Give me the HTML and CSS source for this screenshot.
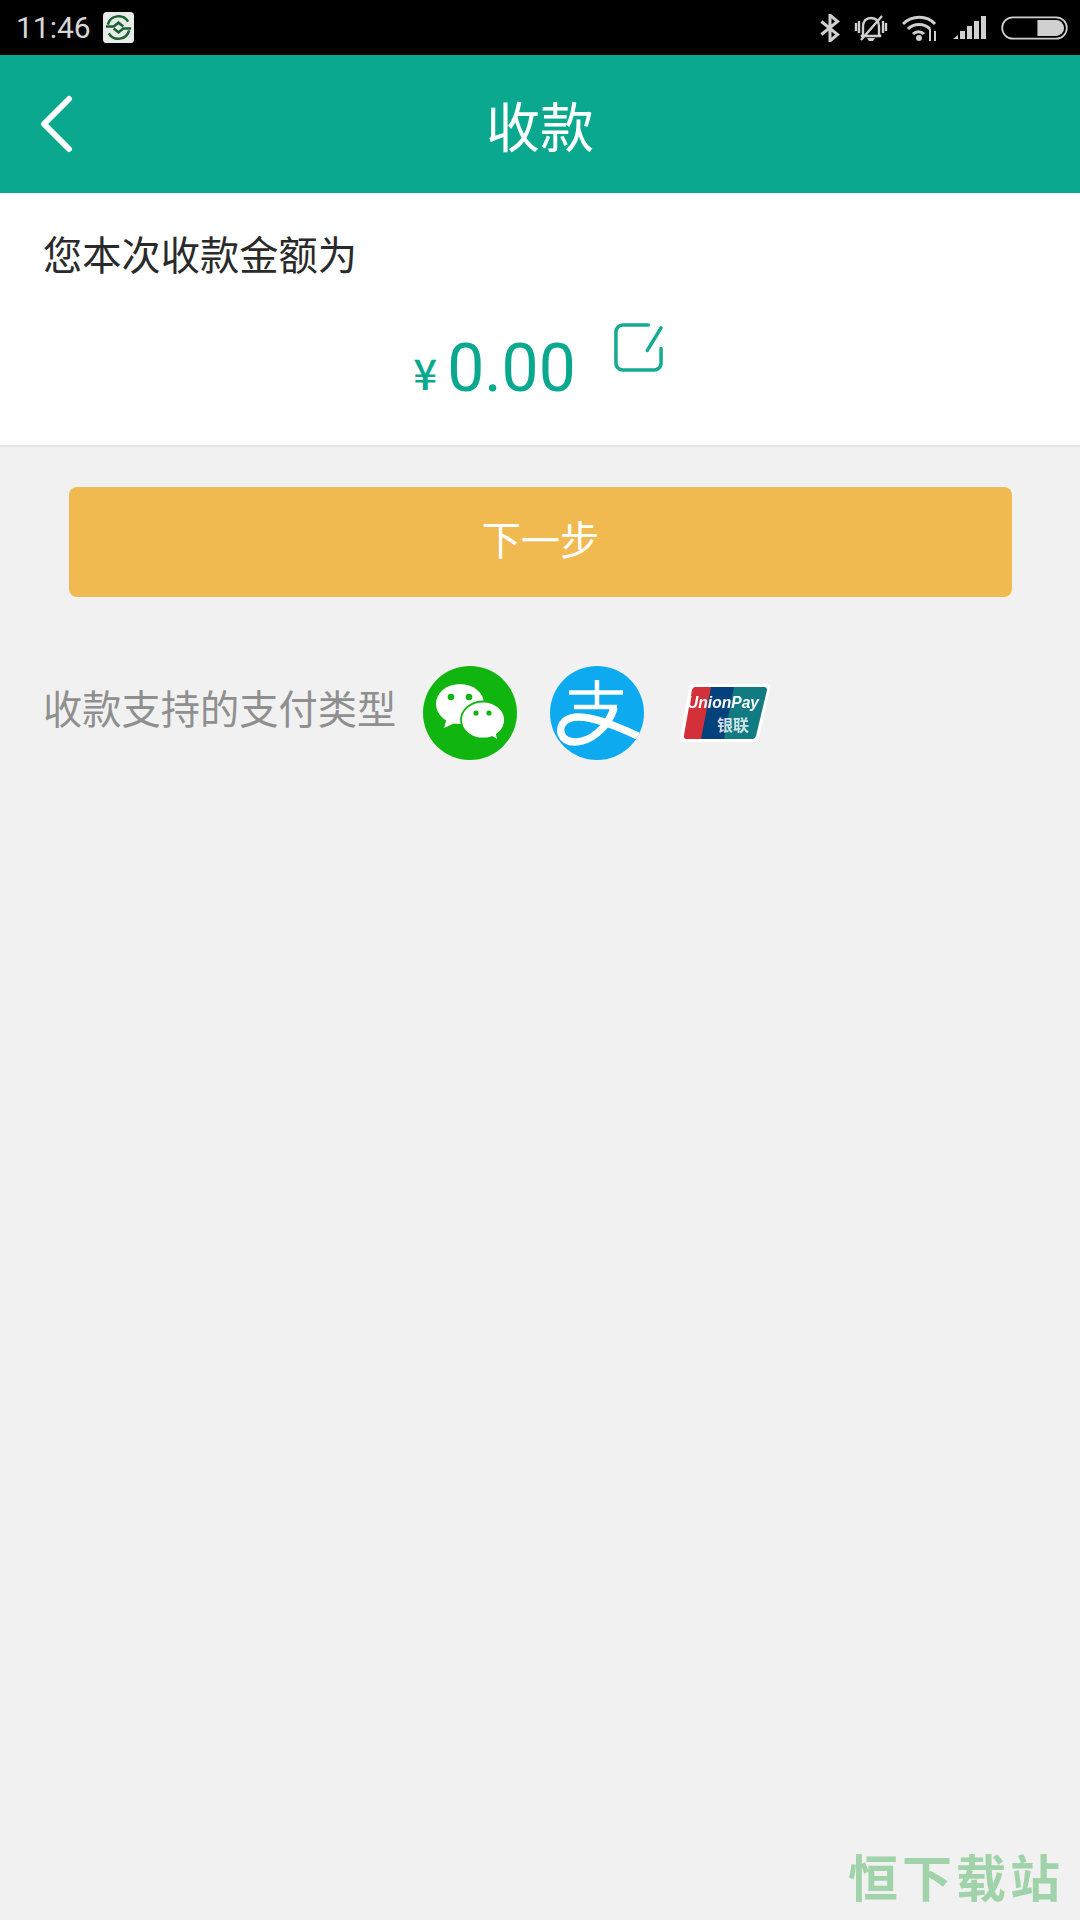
FILE: index.html
```html
<!DOCTYPE html>
<html lang="zh">
<head>
<meta charset="utf-8">
<title>收款</title>
<link rel="stylesheet" href="styles.css">
</head>
<body>
<div class="status">
  <div class="status-left">
    <span class="time">11:46</span>
    <svg class="app-icon" viewBox="0 0 32 32"><rect width="32" height="32" rx="4" fill="#e8ece8"/><g fill="none" stroke="#1b6030" stroke-width="2.6"><path d="M5 13A11.500 11.500 0 0 1 26 10"/><path d="M27 19A11.500 11.500 0 0 1 6 22"/><path d="M3 15H11L16 11L21 15"/><path d="M29 17H21L16 21L11 17"/></g></svg>
  </div>
  <div class="status-right">
    <svg class="s-bt" viewBox="0 0 20 26"><path d="M2 7L17 19L10 25V1L17 7L2 19" fill="none" stroke="#d0d0d0" stroke-width="2.800"/></svg>
    <svg class="s-bell" viewBox="0 0 34 26"><g fill="none" stroke="#d0d0d0" stroke-width="2.400"><path d="M9 20V12C9 6 12 3 17 3C22 3 25 6 25 12V20L27 21H7Z"/><path d="M28 1L7 25"/><path d="M2 8V16M5 6V18M32 8V16M29 6V18"/></g><path d="M13 23H21L19 26H15Z" fill="#d0d0d0"/></svg>
    <svg class="s-wifi" viewBox="0 0 36 26"><g fill="none" stroke="#d0d0d0" stroke-width="3"><path d="M1 9C10 0 25 0 33 9"/><path d="M6 14C12 8 22 8 28 14"/><path d="M11 19C14 16 19 16 22 19"/></g><circle cx="17" cy="23" r="3" fill="#d0d0d0"/><path d="M28 14V26M33 16V26" stroke="#d0d0d0" stroke-width="2"/></svg>
    <svg class="s-signal" viewBox="0 0 34 24"><g fill="#d0d0d0"><path d="M0 23L5 19V23Z"/><rect x="7" y="15" width="5" height="8"/><rect x="14" y="10" width="5" height="13"/><rect x="21" y="5" width="5" height="18"/><rect x="28" y="0" width="5" height="23"/></g></svg>
    <svg class="s-batt" viewBox="0 0 68 24"><rect x="1.200" y="1.200" width="65.600" height="21.600" rx="10.800" fill="none" stroke="#d0d0d0" stroke-width="1.800"/><path d="M37 4H56A8 8 0 0 1 56 20H37Z" fill="#d0d0d0"/></svg>
  </div>
</div>
<header class="topbar">
  <svg class="back" viewBox="0 0 34 58"><path d="M30 4L5 29L30 54" fill="none" stroke="#fff" stroke-width="6" stroke-linecap="round" stroke-linejoin="round"/></svg>
  <h1 class="title">收款</h1>
</header>
<section class="card">
  <p class="prompt">您本次收款金额为</p>
  <div class="amount-row">
    <span class="currency">¥</span><span class="amount">0.00</span>
    <svg class="edit" viewBox="0 0 52 52"><g fill="none" stroke="#15ab91" stroke-width="3.600" stroke-linecap="round"><path d="M36 3H10A7 7 0 0 0 3 10V42A7 7 0 0 0 10 49H42A7 7 0 0 0 49 42V27"/><path d="M49 6L35 29"/></g></svg>
  </div>
</section>
<div class="action"><div class="next">下一步</div></div>
<div class="support">
  <span class="support-label">收款支持的支付类型</span>
  <svg class="pay" viewBox="0 0 94 94">
    <circle cx="47" cy="47" r="47" fill="#11b50f"/>
    <ellipse cx="37" cy="38" rx="24" ry="20" fill="#fff"/>
    <path d="M24 52L21 62L34 56Z" fill="#fff"/>
    <ellipse cx="60" cy="54" rx="22" ry="18.500" fill="#fff" stroke="#11b50f" stroke-width="1.800"/>
    <path d="M66 68L74 73L72 64Z" fill="#fff"/>
    <g fill="#11b50f"><circle cx="28" cy="31" r="3.300"/><circle cx="46" cy="31" r="3.300"/><circle cx="53" cy="47" r="2.600"/><circle cx="66" cy="47" r="2.600"/></g>
  </svg>
  <svg class="pay" viewBox="0 0 94 94">
    <defs><clipPath id="ali"><circle cx="47" cy="47" r="47"/></clipPath></defs>
    <circle cx="47" cy="47" r="47" fill="#0daaf0"/>
    <g clip-path="url(#ali)" fill="none" stroke="#fff">
      <path d="M19 26.500H73M24 41H67M47 14V41" stroke-width="4.500"/>
      <path d="M64 42C58 62 40 76 25 76C10 76 7 62 15 55C26 46 50 52 92 72" stroke-width="7.500"/>
    </g>
  </svg>
  <svg class="union" viewBox="0 0 92 60">
    <path d="M14 1H88Q92 1 91 5L80 55Q79 59 75 59H4Q0 59 1 55L10 5Q11 1 14 1Z" fill="#fff"/>
    <path d="M16 4H42L32 56H8Q4 56 5 52L13 7Q14 4 16 4Z" fill="#d3303a"/>
    <path d="M32 4H60L50 56H22Z" fill="#04427e"/>
    <path d="M55 4H85Q88 4 88 7L77 53Q76 56 73 56H45Z" fill="#127a81"/>
    <text class="union-en" x="8" y="25" textLength="72" lengthAdjust="spacingAndGlyphs">UnionPay</text>
    <text class="union-cn" x="38" y="48">银联</text>
  </svg>
</div>
<div class="watermark">恒下载站</div>
</body>
</html>
```
FILE: styles.css
```css
* { box-sizing: border-box; }
html, body { margin: 0; padding: 0; }
body {
  width: 1080px;
  height: 1920px;
  background: #f1f1f1;
  font-family: "Noto Sans CJK SC", Roboto, sans-serif;
  overflow: hidden;
  display: flex;
  flex-direction: column;
  position: relative;
}
.status {
  height: 55px;
  background: #000;
  display: flex;
  justify-content: space-between;
  align-items: center;
  padding: 0 12px 0 16px;
  flex: none;
}
.status-left, .status-right { display: flex; align-items: center; }
.time { font-family: Roboto, sans-serif; font-size: 30px; color: #d6d6d6; font-weight: 400; }
.app-icon { width: 31px; height: 31px; margin-left: 12px; }
.s-bt { width: 22px; height: 28px; margin-right: 13px; }
.s-bell { width: 34px; height: 28px; margin-right: 14px; }
.s-wifi { width: 36px; height: 26px; margin-right: 15px; }
.s-signal { width: 34px; height: 24px; margin-right: 14px; }
.s-batt { width: 67px; height: 24px; }
.topbar {
  height: 138px;
  background: #0aa98f;
  flex: none;
  display: flex;
  align-items: center;
  justify-content: center;
  position: relative;
}
.back { position: absolute; left: 39px; top: 40px; width: 34px; height: 58px; }
.title { margin: 0; font-size: 54px; font-weight: 400; color: #fff; }
.card {
  height: 254px;
  background: #fff;
  border-bottom: 2px solid #e4e4e4;
  flex: none;
  padding: 0 43px;
}
.prompt { margin: 0; padding-top: 32px; font-size: 39.250px; line-height: 56px; color: #2a2a2a; }
.amount-row {
  display: flex;
  align-items: flex-start;
  justify-content: center;
  color: #0aa98f;
  margin-top: 48px;
  padding-right: 3px;
}
.currency { font-family: "Noto Sans CJK SC", sans-serif; font-weight: 500; font-size: 42px; line-height: 40px; margin-top: 23px; }
.amount { font-family: Roboto, sans-serif; font-size: 66px; line-height: 80px; margin-left: 10px; }
.edit { width: 51px; height: 51px; margin-left: 37px; margin-top: -7px; }
.action { padding: 40px 68px 0 69px; flex: none; }
.next {
  height: 110px;
  background: #f0ba50;
  border-radius: 8px;
  color: #fff;
  font-size: 39.250px;
  display: flex;
  align-items: center;
  justify-content: center;
  padding-bottom: 10px;
}
.support {
  display: flex;
  align-items: center;
  padding: 69px 0 0 43px;
  flex: none;
}
.support-label { font-size: 39.250px; color: #8f8f8f; margin-right: 27px; padding-bottom: 13px; }
.pay { width: 94px; height: 94px; margin-right: 33px; flex: none; filter: blur(0.4px); }
.union { width: 92px; height: 60px; flex: none; margin-left: 2px; filter: blur(0.4px); }
.union-en { font-family: "Liberation Sans", sans-serif; font-size: 16px; font-weight: 700; font-style: italic; fill: #fff; }
.union-cn { font-family: "Noto Sans CJK SC", sans-serif; font-size: 16px; font-weight: 700; fill: #fff; opacity: .8; }
.watermark {
  position: absolute;
  right: 16px;
  bottom: 15px;
  font-family: "Noto Sans CJK SC", sans-serif;
  font-size: 50px;
  font-weight: 700;
  line-height: 60px;
  color: #a0d3a9;
  letter-spacing: 4px;
  filter: blur(0.6px);
}
```
